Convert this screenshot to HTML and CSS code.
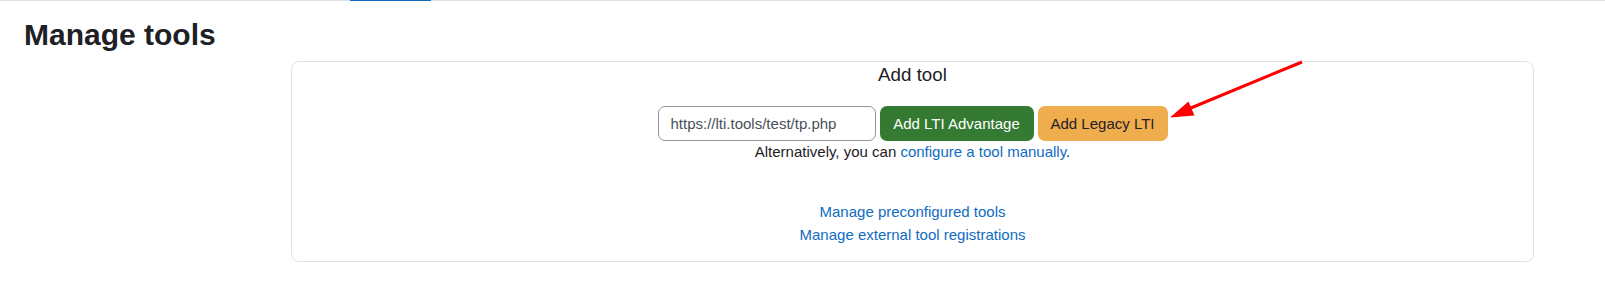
FILE: index.html
```html
<!DOCTYPE html>
<html lang="en">
<head>
  <meta charset="UTF-8" />
  <title>Manage tools</title>
  <link rel="stylesheet" href="styles.css">
</head>
<body>
  <nav class="tabs">
    <div class="tab-active"></div>
  </nav>

  <div class="page">
    <h2 class="page-title">Manage tools</h2>

    <section class="card">
      <h5 class="card-title">Add tool</h5>
      <form class="add-row" onsubmit="return false;">
        <input class="url-input" type="text" value="https://lti.tools/test/tp.php" />
        <button class="btn btn-success" type="button">Add LTI Advantage</button>
        <button class="btn btn-warning" type="button">Add Legacy LTI</button>
      </form>
      <p class="alt">Alternatively, you can <a href="#">configure a tool manually</a>.</p>

      <div class="links">
        <a href="#">Manage preconfigured tools</a>
        <a href="#">Manage external tool registrations</a>
      </div>
    </section>
  </div>

  <!-- annotation arrow over the screenshot -->
  <svg class="annotation" width="1605" height="287" viewBox="0 0 1605 287">
    <line x1="1302" y1="62" x2="1186" y2="110" stroke="#ff0000" stroke-width="3" />
    <polygon points="1170,117.5 1194.5,115.5 1188.5,101.5" fill="#ff0000" />
  </svg>
</body>
</html>
```

FILE: styles.css
```css
:root {
  --text: #1d2125;
  --border: #dee2e6;
  --link: #0f6cbf;
  --success: #357a32;
  --warning: #f0ad4e;
}

html, body {
  margin: 0;
  padding: 0;
  font-family: 'Liberation Sans', Arial, sans-serif;
  font-size: 15px;
  line-height: 1.5;
  color: var(--text);
  background: #fff;
}

.tabs {
  height: 1px;
  background: var(--border);
  padding-left: 350px;
}

.tab-active {
  width: 81px;
  height: 1px;
  background: var(--link);
}

.page {
  padding: 0 71px 0 24px;
}

.page-title {
  margin: 16px 0 0;
  font-size: 30px;
  line-height: 36px;
  font-weight: 700;
}

.card {
  margin: 8px 0 0 267px;
  border: 1px solid var(--border);
  border-radius: 8px;
  padding: 2px 16px 15px;
  text-align: center;
}

.card-title {
  margin: 0;
  font-size: 18.75px;
  line-height: 22.5px;
  font-weight: 400;
}

.add-row {
  display: flex;
  justify-content: center;
  gap: 4px;
  margin-top: 19.5px;
}

.url-input {
  box-sizing: border-box;
  width: 218px;
  height: 35px;
  padding: 0 12px;
  border: 1px solid #8f959e;
  border-radius: 7px;
  font-family: inherit;
  font-size: 15px;
  color: #495057;
}

.btn {
  box-sizing: border-box;
  height: 35px;
  padding: 0 12px;
  border: 1px solid transparent;
  border-radius: 7px;
  font-family: inherit;
  font-size: 15px;
  cursor: pointer;
}

.btn-success {
  width: 154px;
  background: var(--success);
  color: #fff;
}

.btn-warning {
  width: 130px;
  background: var(--warning);
  color: var(--text);
}

.alt {
  margin: 0;
}

a {
  color: var(--link);
  text-decoration: none;
}

.links {
  margin-top: 37.5px;
  display: flex;
  flex-direction: column;
  align-items: center;
}

.annotation {
  position: absolute;
  top: 0;
  left: 0;
  pointer-events: none;
}
```
